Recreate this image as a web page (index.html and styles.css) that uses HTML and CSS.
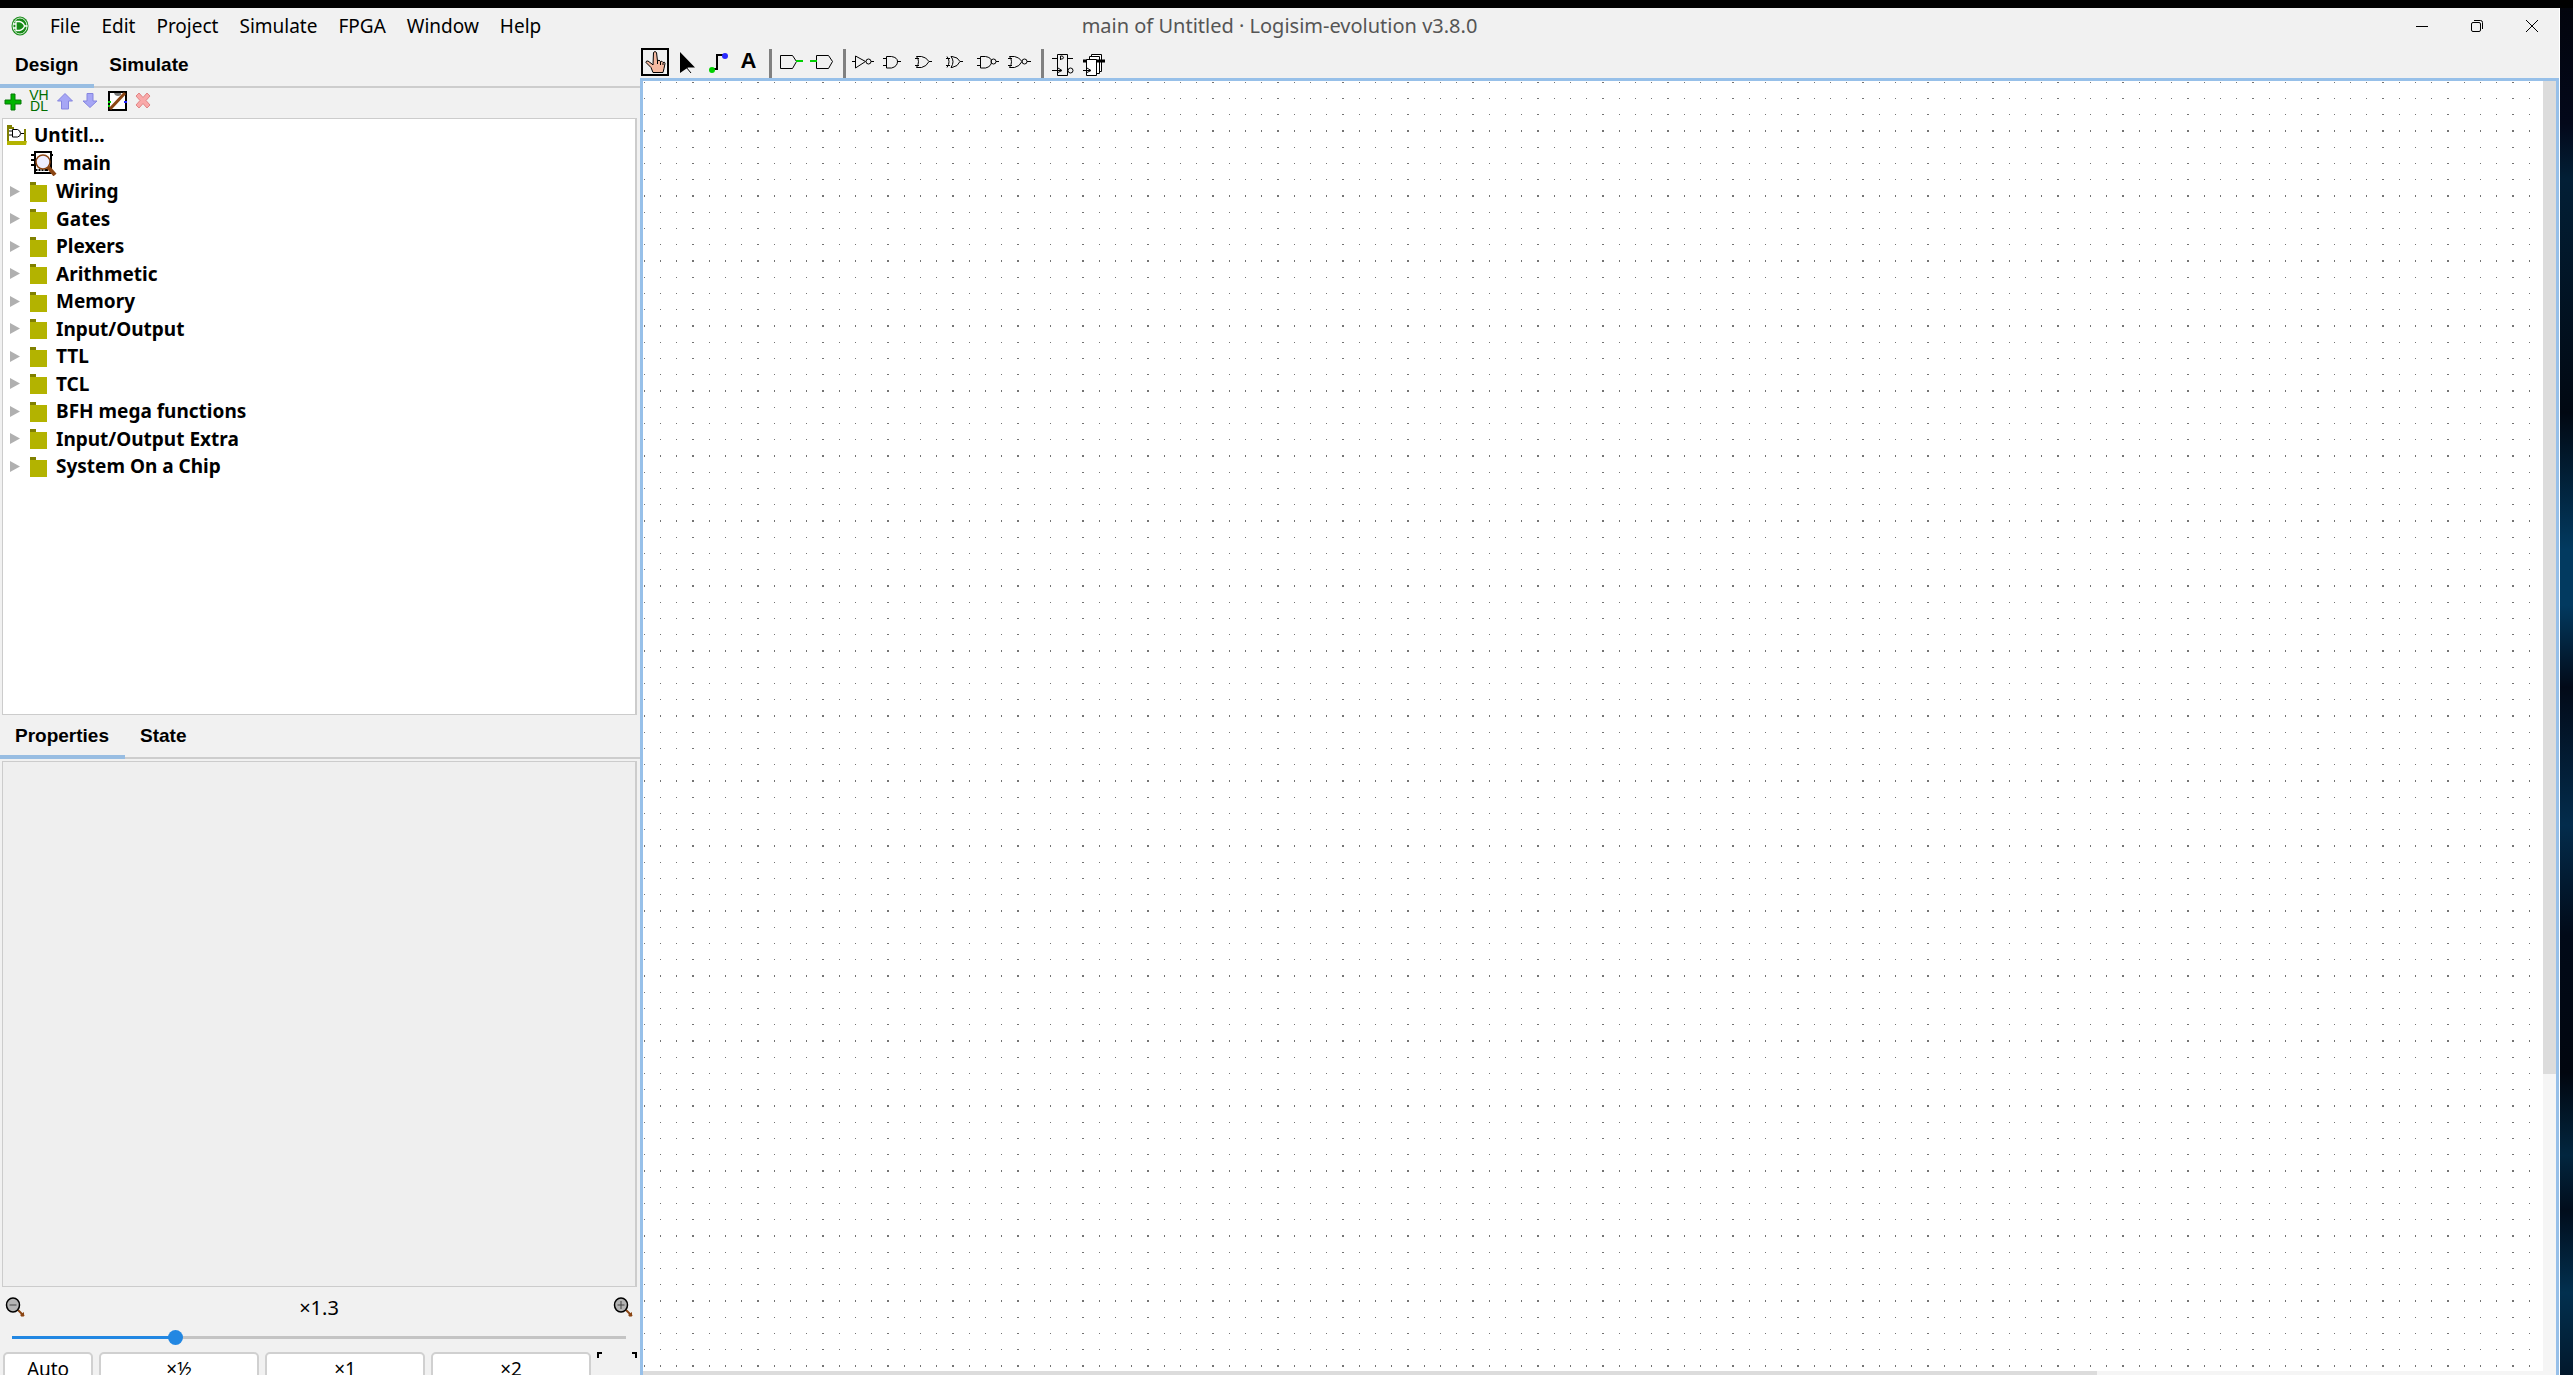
FILE: index.html
```html
<!DOCTYPE html>
<html lang="en">
<head>
<meta charset="utf-8">
<title>main of Untitled · Logisim-evolution v3.8.0</title>
<link rel="stylesheet" href="styles.css">
</head>
<body>
<svg class="defs" aria-hidden="true">
  <symbol id="folder" viewBox="0 0 18 21"><path d="M0 1h6v3H0z" fill="#808000"/><path d="M0 4h17v17H0z" fill="#b3b300"/></symbol>
  <symbol id="arrow" viewBox="0 0 10 11"><path d="M0 0l10 5.500l-10 5.500z" fill="#b0b0b0"/></symbol>
</svg>
<div class="window">
  <header class="titlebar">
    <nav class="menu">
      <svg class="logo" viewBox="0 0 18 20"><ellipse cx="9" cy="10" rx="8.500" ry="9.500" fill="#178a17"/><ellipse cx="9" cy="10" rx="7" ry="8" fill="none" stroke="#d8efd8"/><path d="M5 5.500h3.500q4 1 5 4.500q-1 3.500-5 4.500H5zM2 8h3M2 12h3M13.500 10h3" fill="none" stroke="#fff" stroke-width="1.300"/></svg>
      <button>File</button><button>Edit</button><button>Project</button><button>Simulate</button><button>FPGA</button><button>Window</button><button>Help</button>
    </nav>
    <h1 class="title">main of Untitled · Logisim-evolution v3.8.0</h1>
    <div class="controls">
      <button aria-label="Minimize"><svg viewBox="0 0 14 14"><path d="M1 7.500h12"/></svg></button>
      <button aria-label="Restore"><svg viewBox="0 0 14 14"><rect x="1.500" y="3.500" width="9" height="9" rx="1.500"/><path d="M4 1.500h6.500q2 0 2 2V10"/></svg></button>
      <button aria-label="Close"><svg viewBox="0 0 14 14"><path d="M1 1l12 12M13 1l-12 12"/></svg></button>
    </div>
  </header>
  <div class="work">
    <aside class="side">
      <div class="tabs"><button class="tab active">Design</button><button class="tab">Simulate</button></div>
      <div class="tools">
        <button aria-label="Add circuit"><svg viewBox="0 0 20 22"><path d="M8 4h4v6h6v4h-6v6H8v-6H2v-4h6z" fill="#00b400" stroke="#087808"/></svg></button>
        <button class="vhdl">VH<br>DL</button>
        <button aria-label="Move up"><svg viewBox="0 0 20 22"><path d="M10 3.500l7.500 7.500h-4v8h-7v-8h-4z" fill="#a6a6f5" stroke="#8585e0"/></svg></button>
        <button aria-label="Move down"><svg viewBox="0 0 20 22"><path d="M9 17.500l-7-6.500h4V3.500h6V11h4z" fill="#a6a6f5" stroke="#8585e0"/></svg></button>
        <button aria-label="Edit appearance"><svg viewBox="0 0 20 22"><rect x="2" y="2" width="17" height="18" fill="#fff" stroke="#000" stroke-width="2"/><path d="M7 3h7v2q-3 2-6 0z" fill="#777"/><path d="M1 12h3M1 16h2" stroke="#0c0" stroke-width="2"/><path d="M17 12h3" stroke="#22f" stroke-width="2"/><path d="M3 19L18 3" stroke="#8b4513" stroke-width="3"/></svg></button>
        <button aria-label="Delete circuit"><svg viewBox="0 0 20 22"><path d="M3 6l3-3l4 4.500l4-4.500l3 3l-4 4.500l4 4.500l-3 3l-4-4.500l-4 4.500l-3-3l4-4.500z" fill="#f9a9a9" stroke="#e08585"/></svg></button>
      </div>
      <div class="tree">
        <button class="project"><svg class="ico20" viewBox="0 0 20 20"><path d="M0 0h5v2h2v2H2v12H0zM17 4h2v12h-2z" fill="#808000"/><path d="M0 16h20l-1 4H0z" fill="#b3b300"/><path d="M5.500 4.500h5q3 1 3 4q0 3-3 3.500h-5zM2 6h3M2 10h3M14 8.500h3" fill="none" stroke="#000"/></svg>Untitl...</button>
        <button class="circuit"><svg class="ico26" viewBox="0 0 26 26"><rect x="4" y="2" width="16" height="21" fill="#fff" stroke="#000" stroke-width="2"/><path d="M0 5h3M0 10h3M0 15h3M20 5h2M4 20h13" stroke="#000" stroke-width="2"/><path d="M7 19v3M10 19v3M13 19v3" stroke="#fff"/><circle cx="12" cy="12" r="7" fill="#eef" stroke="#8b4513" stroke-width="1.500"/><path d="M17 17l7 8" stroke="#8b4513" stroke-width="4"/></svg>main</button>
        <ul class="libs">
          <li><button><svg class="tri"><use href="#arrow"/></svg><svg class="folder"><use href="#folder"/></svg>Wiring</button></li>
          <li><button><svg class="tri"><use href="#arrow"/></svg><svg class="folder"><use href="#folder"/></svg>Gates</button></li>
          <li><button><svg class="tri"><use href="#arrow"/></svg><svg class="folder"><use href="#folder"/></svg>Plexers</button></li>
          <li><button><svg class="tri"><use href="#arrow"/></svg><svg class="folder"><use href="#folder"/></svg>Arithmetic</button></li>
          <li><button><svg class="tri"><use href="#arrow"/></svg><svg class="folder"><use href="#folder"/></svg>Memory</button></li>
          <li><button><svg class="tri"><use href="#arrow"/></svg><svg class="folder"><use href="#folder"/></svg>Input/Output</button></li>
          <li><button><svg class="tri"><use href="#arrow"/></svg><svg class="folder"><use href="#folder"/></svg>TTL</button></li>
          <li><button><svg class="tri"><use href="#arrow"/></svg><svg class="folder"><use href="#folder"/></svg>TCL</button></li>
          <li><button><svg class="tri"><use href="#arrow"/></svg><svg class="folder"><use href="#folder"/></svg>BFH mega functions</button></li>
          <li><button><svg class="tri"><use href="#arrow"/></svg><svg class="folder"><use href="#folder"/></svg>Input/Output Extra</button></li>
          <li><button><svg class="tri"><use href="#arrow"/></svg><svg class="folder"><use href="#folder"/></svg>System On a Chip</button></li>
        </ul>
      </div>
      <div class="tabs"><button class="tab active">Properties</button><button class="tab">State</button></div>
      <div class="properties"></div>
      <div class="zoom">
        <div class="zoomrow">
          <button aria-label="Zoom out"><svg class="ico20" viewBox="0 0 20 20"><path d="M13 13l6 6" stroke="#8b4513" stroke-width="2"/><path d="M15 18l4-3v3l-2 2z" fill="#8b4513"/><ellipse cx="8" cy="8" rx="6.500" ry="7" fill="#b4b4b4" stroke="#000" stroke-width="1.500"/><path d="M4.500 8h7" stroke="#444"/></svg></button>
          <label for="zoom">×1.3</label>
          <button aria-label="Zoom in"><svg class="ico20" viewBox="0 0 20 20"><path d="M13 13l6 6" stroke="#8b4513" stroke-width="2"/><path d="M15 18l4-3v3l-2 2z" fill="#8b4513"/><ellipse cx="8" cy="8" rx="6.500" ry="7" fill="#b4b4b4" stroke="#000" stroke-width="1.500"/><path d="M4.500 8h7M8 4v8" stroke="#444"/></svg></button>
        </div>
        <input id="zoom" class="slider" type="range" min="0" max="100" value="26">
        <div class="presets">
          <button class="auto">Auto</button><button>×½</button><button>×1</button><button>×2</button>
          <button class="fit" aria-label="Zoom to fit"><svg viewBox="0 0 40 34"><path d="M1 6V1h4M35 1h4v5M1 28v5h4M35 33h4v-5"/></svg></button>
        </div>
      </div>
    </aside>
    <main class="editor">
      <div class="toolbar">
        <button aria-label="Poke"><svg viewBox="0 0 31 34"><rect x="2" y="5" width="26" height="26" fill="none" stroke="#000" stroke-width="2"/><path d="M13.500 8.500q1.500-2 3 0l1 8.500q1.500-2 3 .5q1.500-1 2.500 1q2-1 2 1l-1 5l-1 4H13l-2-5l-5-5q0-2 2-1.500l4 3l1 1z" fill="#f4b9a0" stroke="#000"/><path d="M17.500 17v3M20.500 18v3M23 19v2" stroke="#000"/></svg></button>
        <button aria-label="Select"><svg viewBox="0 0 31 34"><path d="M9 8l15 15.500h-7L9 29z"/><path d="M15 23l5 6" stroke="#000"/></svg></button>
        <button aria-label="Wire"><svg viewBox="0 0 31 34"><path d="M10 25h5V11h8" fill="none" stroke="#000" stroke-width="2"/><circle cx="10" cy="26" r="3" fill="#00d000"/><circle cx="23" cy="12" r="3" fill="#2a2aff"/></svg></button>
        <button class="texttool">A</button>
        <span class="sep"></span>
        <button aria-label="Input pin"><svg class="line" viewBox="0 0 31 34"><path d="M4.500 11.500h12l4 6l-4 7h-12z"/><path class="wire" d="M20 17h7"/></svg></button>
        <button aria-label="Output pin"><svg class="line" viewBox="0 0 31 34"><path d="M9.500 11.500h12l4 6l-4 7h-12z"/><path class="wire" d="M3 17h7"/></svg></button>
        <span class="sep"></span>
        <button aria-label="NOT gate"><svg class="line" viewBox="0 0 31 34"><path d="M2 17.500h3M5.500 12v12l10-6.500zM21 17.500h3"/><circle cx="18.500" cy="17.500" r="2.500"/></svg></button>
        <button aria-label="AND gate"><svg class="line" viewBox="0 0 31 34"><path d="M2 14.500h3M2 21.500h3M5.500 12.500h5q6 1 6 5q0 5-6 6.500h-5zM16 17.500h4"/></svg></button>
        <button aria-label="OR gate"><svg class="line" viewBox="0 0 31 34"><path d="M3 14.500h4M3 21.500h4M4.500 12.500q4 5 0 11h5q5-1 7.500-6q-3-4.500-7.500-5zM17 17.500h3"/></svg></button>
        <button aria-label="XOR gate"><svg class="line" viewBox="0 0 31 34"><path d="M3 14.500h4M3 21.500h4M4 12.500q4 5 0 11M8 12.500q4 5 0 11h1q6-1 8-6q-2-4.500-8-5zM17 17.500h3"/></svg></button>
        <button aria-label="NAND gate"><svg class="line" viewBox="0 0 31 34"><path d="M3 14.500h3M3 21.500h3M6.500 12.500h5q6 1 6 5q0 5-6 6.500h-5zM22 17.500h3"/><circle cx="19.500" cy="17.500" r="2.500"/></svg></button>
        <button aria-label="NOR gate"><svg class="line" viewBox="0 0 31 34"><path d="M3 14.500h4M3 21.500h4M4.500 12.500q4 5 0 11h5q5-1 7.500-6q-3-4.500-7.500-5zM22 17.500h4"/><circle cx="19.500" cy="17.500" r="2.500"/></svg></button>
        <span class="sep"></span>
        <button aria-label="D flip-flop"><svg class="line" viewBox="0 0 31 34"><path d="M9.500 10.500h10v21h-10zM4 14.500h5M20 14.500h5M4 26.500h9M10 24l4 2.500l-4 2M12.500 16v-4h2q2 2 0 3h-2"/><circle cx="22.500" cy="26.500" r="2.500"/></svg></button>
        <button aria-label="Register"><svg class="line" viewBox="0 0 31 34"><path fill="#fff" d="M12.500 10.500h10v17h-10z"/><path fill="#fff" d="M10.500 12.500h10v17h-10z"/><path d="M4 17h5M17 17h9" stroke-width="3"/><path fill="#fff" d="M7.500 15.500h10v16h-10z"/><path d="M4 26.500h7M8 24l4 2.500l-4 2"/></svg></button>
      </div>
      <div class="canvas">
        <svg class="grid" role="img" aria-label="Circuit canvas">
          <defs><pattern id="dots" x="49" y="49" width="65" height="65" patternUnits="userSpaceOnUse"><path fill="#747474" d="M0 0h2v2H0zM17 0h1v2h-1zM33 0h1v2h-1zM49 0h1v2h-1zM0 17h2v1H0zM17 17h1v1h-1zM33 17h1v1h-1zM49 17h1v1h-1zM0 33h2v1H0zM17 33h1v1h-1zM33 33h1v1h-1zM49 33h1v1h-1zM0 49h2v1H0zM17 49h1v1h-1zM33 49h1v1h-1zM49 49h1v1h-1z"/></pattern></defs>
          <rect width="100%" height="100%" fill="url(#dots)"/>
        </svg>
        <div class="vbar"><div class="vthumb"></div></div>
        <div class="hbar"><div class="hthumb"></div></div>
      </div>
    </main>
  </div>
</div>
</body>
</html>
```
FILE: styles.css
```css
* { box-sizing: border-box; }
body {
  margin: 0;
  height: 100vh;
  overflow: hidden;
  border-top: 8px solid #000;
  padding-right: 13px;
  background: linear-gradient(#02040c 0, #03081a 9%, #021f36 13%, #010812 30%, #023a60 40%, #023a60 44%, #020a18 50%, #032c4c 60%, #010a18 68%, #01060f 78%, #02263f 84%, #010d1c 88%, #02304f 94%, #02182c 100%);
  font: 19px "Noto Sans", sans-serif;
  color: #000;
}
button { border: 0; padding: 0; margin: 0; background: none; font: inherit; color: inherit; }
svg { display: block; flex: none; }
.defs { display: none; }
.window { height: 100%; display: flex; flex-direction: column; background: #f1f1f1; border-right: 1px solid #fff; }

.titlebar { flex: none; height: 36px; display: grid; grid-template-columns: 1fr auto 1fr; align-items: center; }
.menu { display: flex; align-items: center; gap: 21px; padding-left: 11px; }
.logo { width: 18px; height: 20px; }
.title { margin: 0; font-size: 20px; line-height: 24px; font-weight: 400; color: #555; }
.controls { display: flex; justify-content: flex-end; }
.controls button { width: 55px; height: 36px; display: flex; align-items: center; justify-content: center; }
.controls svg { width: 14px; height: 14px; fill: none; stroke: #000; }

.work { flex: 1; min-height: 0; display: grid; grid-template-columns: 640px 1fr; }
.side { min-height: 0; display: flex; flex-direction: column; padding-right: 3px; }
.tabs { flex: none; height: 44px; margin-right: -3px; display: flex; border-bottom: 2px solid #cdcdcd; font: bold 19px "Liberation Sans", sans-serif; }
.tab { height: 44px; padding: 2px 16px 0 15px; border-bottom: 4px solid transparent; }
.tab.active { border-color: #98bde2; }
.tools { flex: none; height: 30px; display: flex; align-items: flex-start; }
.tools button { width: 26px; height: 26px; display: flex; align-items: center; justify-content: center; }
.tools svg { width: 20px; height: 22px; }
.tools .vhdl { font: 14px/11px "Liberation Sans", sans-serif; color: #006e00; }

.tree { flex: 597 0 0; min-height: 0; margin-left: 2px; padding: 2px 0 0 4px; background: #fff; border: 1px solid #ccc; border-right-width: 2px; font-weight: 700; }
.tree button { display: flex; align-items: center; height: 100%; text-align: left; line-height: 24px; }
.tree .project { height: 28px; gap: 7px; }
.tree .circuit { height: 28px; gap: 6px; padding-left: 24px; }
.ico20 { width: 20px; height: 20px; }
.ico26 { width: 26px; height: 26px; }
.libs { list-style: none; margin: 0; padding: 0 0 0 3px; }
.libs li { height: 28px; }
.libs li:nth-child(even) { height: 27px; }
.tri { width: 10px; height: 11px; margin-right: 10px; }
.folder { width: 18px; height: 21px; margin-right: 8px; }

.properties { flex: 527 0 0; min-height: 0; margin: 2px 0 0 2px; background: #efefef; border: 1px solid #ccc; border-right-width: 2px; }
.zoom { flex: none; margin-bottom: -10px; }
.zoomrow { height: 40px; display: flex; align-items: center; justify-content: space-between; padding: 0 4px 0 5px; }
.zoomrow label { font-size: 20px; }
.slider { display: block; appearance: none; width: 614px; height: 16px; margin: 2px 0 0 12px; background: linear-gradient(90deg, #2287e2 26%, #c4c4c4 26%) center / 100% 3px no-repeat; }
.slider::-webkit-slider-thumb { appearance: none; width: 15px; height: 15px; border-radius: 50%; background: #2287e2; }
.presets { display: flex; gap: 6px; padding: 7px 0 0 3px; }
.presets button { flex: 1; height: 33px; line-height: 24px; background: #fff; border: 2px solid #d0d0d0; border-radius: 5px; }
.presets .auto { flex: none; width: 90px; }
.presets .fit { flex: none; width: 40px; border: 0; background: none; }
.fit svg { width: 40px; height: 34px; fill: none; stroke: #000; stroke-width: 2; }

.editor { min-width: 0; min-height: 0; display: flex; flex-direction: column; }
.toolbar { flex: none; height: 34px; display: flex; }
.toolbar button, .toolbar svg { width: 31px; height: 34px; }
.toolbar .texttool { font: bold 22px "Liberation Sans", sans-serif; }
.sep { width: 12px; padding-left: 5px; }
.sep::before { content: ""; display: block; width: 3px; height: 29px; margin-top: 5px; background: #808080; }
.line { fill: none; stroke: #000; }
.wire { stroke: #00d000; stroke-width: 2; }
.canvas { flex: 1; min-height: 0; display: grid; grid-template-columns: 1fr 13px; grid-template-rows: 1fr 4px; background: #fff; border: 3px solid #97c0e9; border-bottom: 0; }
.grid { width: 100%; height: 100%; }
.vbar { background: #f5f5f5; }
.vthumb { height: 77%; background: #dcdcdc; }
.hbar { grid-column: 1 / 3; background: #f5f5f5; }
.hthumb { width: 76%; height: 4px; background: #dcdcdc; }
```
